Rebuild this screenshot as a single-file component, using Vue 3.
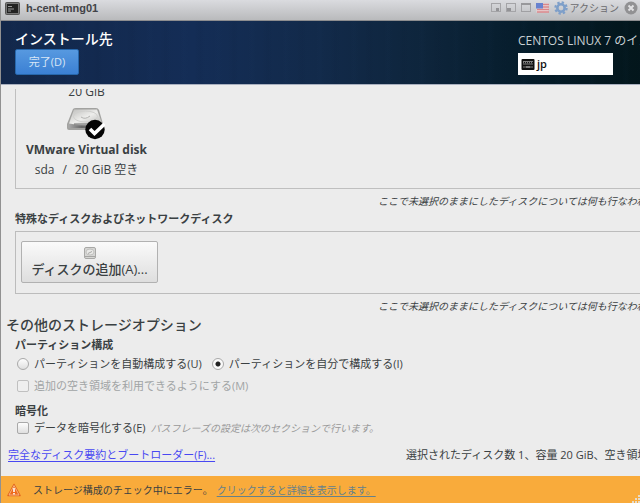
<script setup>
import { ref } from 'vue'

const partitioning = ref('manual')
const reclaim = ref(false)
const encrypt = ref(false)
const note = 'ここで未選択のままにしたディスクについては何も行なわれません。'
</script>

<template>
  <div class="window">
    <header class="titlebar">
      <svg class="console-icon" viewBox="0 0 15 13" aria-hidden="true">
        <rect x=".5" y=".5" width="14" height="12" rx="1" fill="#777" stroke="#555" />
        <rect x="2" y="2" width="11" height="9" fill="#222" />
        <path d="M3 4.5h4M3 7h6M3 9h3" stroke="#999" />
      </svg>
      <span class="host">h-cent-mng01</span>
      <div class="tools">
        <button class="tool" aria-label="最小化">
          <svg width="10" height="10" viewBox="0 0 10 10"><rect x=".5" y=".5" width="9" height="8" fill="none" stroke="#a4a4a7" /><path d="M5 5h3v3H5z" fill="#929295" /></svg>
        </button>
        <button class="tool" aria-label="縮小">
          <svg width="10" height="10" viewBox="0 0 10 10"><rect x=".5" y=".5" width="9" height="8" fill="none" stroke="#a4a4a7" /><path d="M1 5h4v3H1z" fill="#929295" /></svg>
        </button>
        <button class="tool" aria-label="最大化">
          <svg width="10" height="10" viewBox="0 0 10 10"><rect x=".5" y=".5" width="9" height="8" fill="none" stroke="#a0a0a3" /><path d="M0 1h10" stroke="#98989b" stroke-width="2" /></svg>
        </button>
        <button class="tool flag" aria-label="キーボード配列">
          <svg width="13" height="10" viewBox="0 0 13 10">
            <rect width="12" height="9" x=".5" y=".5" fill="#ead8da" />
            <path d="M1 1.500h12M1 4h12M1 6.500h12M1 9h12" stroke="#d9868a" stroke-width="1.300" />
            <rect width="7" height="5.500" fill="#6882cf" />
          </svg>
        </button>
        <button class="tool action">
          <svg width="14" height="14" viewBox="0 0 14 14">
            <circle cx="7" cy="7" r="5.600" fill="none" stroke="#7e9fc9" stroke-width="2.200" stroke-dasharray="2.300 2.098" />
            <circle cx="7" cy="7" r="3.700" fill="none" stroke="#7e9fc9" stroke-width="2.600" />
          </svg>
          <span>アクション</span>
        </button>
        <button class="tool" aria-label="閉じる">
          <svg width="14" height="14" viewBox="0 0 14 14"><circle cx="7" cy="7" r="6.500" fill="#919193" /><path d="M4.500 4.500l5 5M9.500 4.500l-5 5" stroke="#e0e0e2" stroke-width="2" /></svg>
        </button>
      </div>
    </header>

    <section class="banner">
      <div class="heading">
        <h1>インストール先</h1>
        <button class="done">完了(D)</button>
      </div>
      <div class="product">
        <span class="product-name">CENTOS LINUX 7 のインストール</span>
        <button class="layout">
          <svg width="14" height="11" viewBox="0 0 13 11" aria-hidden="true">
            <rect width="13" height="11" rx="1" fill="#111" />
            <path d="M2 2.500h9M2 5h9" stroke="#eee" stroke-dasharray="1 1" />
            <path d="M1.500 3.700h10" stroke="#999" stroke-dasharray="1 1" />
            <path d="M2 8h1M4 8h5M10 8h1" stroke="#eee" />
          </svg>
          <span>jp</span>
        </button>
      </div>
    </section>

    <main>
      <div class="disks">
        <div class="disk">
          <span class="size">20 GiB</span>
          <svg class="drive" width="38" height="32" viewBox="0 0 38 32" aria-hidden="true">
            <defs>
              <linearGradient id="lid" x1="0" y1="0" x2="1" y2="1"><stop offset="0" stop-color="#bcbcba" /><stop offset=".5" stop-color="#ededeb" /><stop offset="1" stop-color="#b5b5b3" /></linearGradient>
              <linearGradient id="front" x1="0" y1="0" x2="1" y2="0"><stop offset="0" stop-color="#aaa" /><stop offset=".4" stop-color="#666" /><stop offset="1" stop-color="#888" /></linearGradient>
            </defs>
            <path d="M6 1Q7 0 9 0h20q2 0 3 2l4 14v4q0 2-2 2H2q-2 0-2-2v-4z" fill="#a2a2a0" />
            <path d="M7 1.500h23l5 14q-10 3-33 0z" fill="url(#lid)" />
            <path d="M1.500 16q15 3 33 0v4h-33z" fill="url(#front)" />
            <path d="M7 15h20v2H7z" fill="#555" opacity=".4" />
            <ellipse cx="18.500" cy="8.500" rx="12" ry="5.500" fill="none" stroke="#d0d0ce" />
            <path d="M14 9q4 3 9-1" fill="none" stroke="#b2b2b0" />
            <circle cx="28" cy="21.500" r="9.700" fill="#050505" />
            <path d="M23 21l4.500 4.500L37.500 16" fill="none" stroke="#fff" stroke-width="3.600" />
          </svg>
          <strong>VMware Virtual disk</strong>
          <div class="detail"><span>sda</span><span>/</span><span>20 GiB 空き</span></div>
        </div>
      </div>
      <p class="note">{{ note }}</p>

      <h3 class="special">特殊なディスクおよびネットワークディスク</h3>
      <div class="network">
        <button class="add">
          <svg width="12" height="12" viewBox="0 0 12 12" aria-hidden="true">
            <rect x=".5" y=".5" width="11" height="11" rx="1.500" fill="#d6d6d4" stroke="#a8a8a6" />
            <ellipse cx="6" cy="5" rx="4" ry="3" fill="#e9e9e7" stroke="#c0c0be" />
            <path d="M4 6.500l4-2M1 9.500h10" stroke="#a5a5a3" />
          </svg>
          <span>ディスクの追加(A)...</span>
        </button>
      </div>
      <p class="note">{{ note }}</p>

      <h2>その他のストレージオプション</h2>
      <h3>パーティション構成</h3>
      <div class="options">
        <label><input v-model="partitioning" type="radio" name="partitioning" value="auto">パーティションを自動構成する(U)</label>
        <label><input v-model="partitioning" type="radio" name="partitioning" value="manual">パーティションを自分で構成する(I)</label>
      </div>
      <div class="options reclaim">
        <label><input v-model="reclaim" type="checkbox" disabled>追加の空き領域を利用できるようにする(M)</label>
      </div>
      <h3>暗号化</h3>
      <div class="options encrypt">
        <label><input v-model="encrypt" type="checkbox">データを暗号化する(E)</label>
        <em>パスフレーズの設定は次のセクションで行います。</em>
      </div>
    </main>

    <div class="summary">
      <a href="#summary">完全なディスク要約とブートローダー(F)...</a>
      <span>選択されたディスク数 1、容量 20 GiB、空き領域 20 GiB</span>
    </div>

    <footer class="error">
      <svg width="14" height="14" viewBox="0 0 14 14" aria-hidden="true">
        <path d="M7 1.500L13 12.500H1z" fill="#ef6b1d" stroke="#e2651c" stroke-width="1.500" stroke-linejoin="round" />
        <path d="M7 2.500L12 12H2z" fill="none" stroke="#f8b27c" />
        <path d="M7 5v4M7 10v1.500" stroke="#fff" stroke-width="1.600" />
      </svg>
      <p>ストレージ構成のチェック中にエラー。<a href="#details">クリックすると詳細を表示します。</a></p>
      <svg class="grip" width="8" height="8" viewBox="0 0 8 8" aria-hidden="true">
        <path d="M0 6h2v2H0zM3 6h2v2H3zM6 6h2v2H6zM3 3h2v2H3zM6 3h2v2H6zM6 0h2v2H6z" fill="#e6dccb" />
      </svg>
    </footer>
  </div>
</template>

<style>
body {
  margin: 0;
  background: #ececec;
}
</style>

<style scoped>
.window {
  display: flex;
  flex-direction: column;
  box-sizing: border-box;
  min-height: 100vh;
  overflow: hidden;
  border-left: 1px solid #919191;
  background: #ececec;
  color: #3a4042;
  font-family: "Open Sans", "Noto Sans CJK JP", sans-serif;
  font-size: 11px;
  line-height: 16px;
  white-space: nowrap;
}
h1, h2, h3, p { margin: 0; }
button {
  font: inherit;
  color: inherit;
  padding: 0;
}
svg { display: block; flex: none; }

.titlebar {
  display: flex;
  align-items: center;
  height: 16px;
  padding: 0 2px 4px 4px;
  border-bottom: 1px solid #8d8d8f;
  background: linear-gradient(#dadbdf, #b9babc);
}
.console-icon { width: 15px; height: 13px; }
.host {
  flex: 1;
  margin-left: 6px;
  color: #424347;
  font: bold 11px/16px "Liberation Sans", sans-serif;
}
.tools {
  display: flex;
  align-items: center;
  gap: 5px;
}
.tool {
  border: 0;
  background: none;
}
.action {
  display: flex;
  align-items: center;
  gap: 2px;
  font-size: 10px;
  color: #6b6b6f;
}

.banner {
  display: flex;
  justify-content: space-between;
  height: 63px;
  border-bottom: 1px solid #a9b0bf;
  background:
    repeating-linear-gradient(90deg, transparent 0 9px, #28508008 13px, transparent 17px 23px, #0a183010 29px, transparent 34px),
    linear-gradient(90deg, #12274a, #142d56 30%, #122a4a 50%, #0e253c 66%, #051c2a 83%, #03161b);
  overflow: hidden;
  color: #fff;
}
.heading { padding: 8px 0 0 14px; }
h1 {
  font-size: 14px;
  line-height: 20px;
  font-weight: 500;
}
.done {
  width: 64px;
  height: 26px;
  border: 1px solid #2767ab;
  border-radius: 2px;
  background: linear-gradient(#5799e0, #3b80d4);
  color: #d8e6f6;
}
.product {
  width: 122px;
  padding-top: 12px;
}
.product-name {
  display: block;
  color: #c9d0d4;
  font-size: 12px;
}
.layout {
  display: flex;
  align-items: center;
  gap: 2px;
  width: 95px;
  height: 22px;
  margin-top: 4px;
  padding-left: 3px;
  border: 0;
  background: #fff;
  color: #111;
  font-size: 11px;
  font-weight: 600;
}

main { padding: 4px 0 0 14px; }
.disks {
  display: flex;
  flex-direction: column;
  justify-content: flex-end;
  align-items: flex-start;
  height: 99px;
  border: solid #bfbfbf;
  border-width: 0 0 1px 1px;
  overflow: hidden;
}
.disk {
  display: flex;
  flex-direction: column;
  align-items: center;
  padding: 0 10px 8px;
}
.size {
  font-size: 12px;
  margin-bottom: 8px;
}
.disk strong {
  font-size: 12px;
  line-height: 20px;
  font-weight: 700;
}
.detail {
  display: flex;
  gap: 8px;
  font-size: 12px;
  line-height: 20px;
}
.note {
  padding: 4px 0 0 363px;
  font-size: 10px;
  font-style: italic;
}
h3 {
  font-size: 11px;
  line-height: 16px;
  font-weight: 600;
}
.special { margin: 2px 0 4px; }
.network {
  display: flex;
  padding: 9px 5px 10px;
  border: solid #bcbcbc;
  border-width: 1px 0 1px 1px;
}
.add {
  display: flex;
  flex-direction: column;
  align-items: center;
  box-sizing: border-box;
  width: 137px;
  height: 42px;
  padding-top: 5px;
  border: 1px solid #b1b1b1;
  border-radius: 2px;
  background: linear-gradient(#fafafa, #dedede);
  font-size: 13px;
  line-height: 20px;
  font-weight: 500;
}
h2 {
  margin: 1px 0 2px -9px;
  font-size: 14px;
  line-height: 20px;
  font-weight: 500;
}
.options {
  display: flex;
  align-items: center;
  gap: 10px;
  height: 22px;
  padding-left: 2px;
}
.options label {
  display: flex;
  align-items: center;
  gap: 5px;
}
.options input {
  appearance: none;
  box-sizing: border-box;
  width: 12px;
  height: 12px;
  margin: 0;
  border: 1px solid #a9a9a9;
  border-radius: 2px;
  background: linear-gradient(#fdfdfd, #dfdfdf);
}
.options input[type="radio"] { border-radius: 50%; }
.options input[type="radio"]:checked {
  background: radial-gradient(circle, #222 0 2px, #fafafa 3px);
}
.options input:disabled {
  border-color: #c0c0c0;
  background: #efefef;
}
.reclaim {
  margin-bottom: 6px;
  color: #a1a4a5;
}
.encrypt {
  gap: 5px;
  height: 18px;
}
.encrypt em {
  color: #999;
  font-size: 10px;
}

.summary {
  display: flex;
  justify-content: space-between;
  padding: 10px 0 13px 7px;
}
.summary a { color: #4848f2; text-underline-offset: 2px; }
.summary span { width: 234px; }

.error {
  display: flex;
  flex: 1;
  align-items: center;
  padding-left: 6px;
  background: #f9ab3b;
  font-size: 10px;
}
.error p {
  flex: 1;
  margin-left: 12px;
}
.error a { margin-left: 4px; color: #65818b; text-underline-offset: 2px; }
.grip { align-self: flex-end; }
</style>
